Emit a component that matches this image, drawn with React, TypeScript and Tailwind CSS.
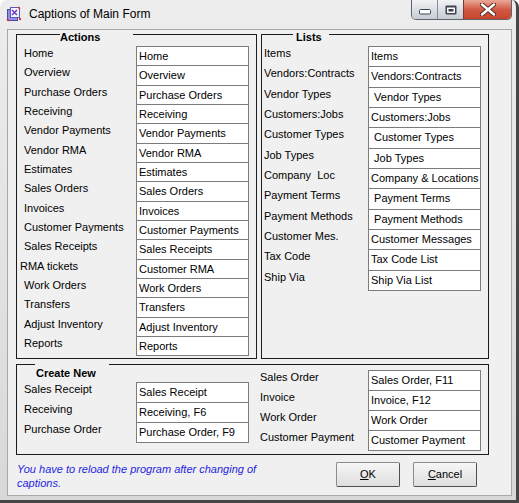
type Row = [string, string, boolean?];

const actions: Row[] = [
  ['Home', 'Home'],
  ['Overview', 'Overview'],
  ['Purchase Orders', 'Purchase Orders'],
  ['Receiving', 'Receiving'],
  ['Vendor Payments', 'Vendor Payments'],
  ['Vendor RMA', 'Vendor RMA'],
  ['Estimates', 'Estimates'],
  ['Sales Orders', 'Sales Orders'],
  ['Invoices', 'Invoices'],
  ['Customer Payments', 'Customer Payments'],
  ['Sales Receipts', 'Sales Receipts'],
  ['RMA tickets', 'Customer RMA', true],
  ['Work Orders', 'Work Orders'],
  ['Transfers', 'Transfers'],
  ['Adjust Inventory', 'Adjust Inventory'],
  ['Reports', 'Reports'],
];

const lists: Row[] = [
  ['Items', 'Items'],
  ['Vendors:Contracts', 'Vendors:Contracts'],
  ['Vendor Types', ' Vendor Types'],
  ['Customers:Jobs', 'Customers:Jobs'],
  ['Customer Types', ' Customer Types'],
  ['Job Types', ' Job Types'],
  ['Company  Loc', 'Company & Locations'],
  ['Payment Terms', ' Payment Terms'],
  ['Payment Methods', ' Payment Methods'],
  ['Customer Mes.', 'Customer Messages'],
  ['Tax Code', 'Tax Code List'],
  ['Ship Via', 'Ship Via List'],
];

const newLeft: Row[] = [
  ['Sales Receipt', 'Sales Receipt'],
  ['Receiving', 'Receiving, F6'],
  ['Purchase Order', 'Purchase Order, F9'],
];

const newRight: Row[] = [
  ['Sales Order', 'Sales Order, F11'],
  ['Invoice', 'Invoice, F12'],
  ['Work Order', 'Work Order'],
  ['Customer Payment', 'Customer Payment'],
];

function Group({
  legend,
  className,
  legendClass,
  children,
}: {
  legend: string;
  className: string;
  legendClass: string;
  children: React.ReactNode;
}) {
  return (
    <div className={`relative shrink-0 border border-[#1c1c1c] ${className}`}>
      <span className={`absolute bg-[#f0f0f0] font-bold leading-[14px] ${legendClass}`}>{legend}</span>
      {children}
    </div>
  );
}

function AppIcon() {
  return (
    <svg width="16" height="16" viewBox="0 0 16 16" className="-ml-[1px] mt-[6px] shrink-0">
      <rect x="1.5" y="3.5" width="10" height="11" fill="#8f8fe6" stroke="#4b4ba8" />
      <rect x="4.5" y="1.5" width="9" height="10" fill="#f4f4ff" stroke="#5a5ab8" />
      <path d="M6 4 L11 9 M11 4 L6 9" stroke="#7a3cc8" strokeWidth="1.6" />
      <path d="M12 1 l2 2 M1 13 l2 2" stroke="#e0303a" strokeWidth="1.5" />
      <circle cx="14" cy="13" r="1.2" fill="#e0303a" />
    </svg>
  );
}

function CaptionButtons() {
  return (
    <div className="ml-auto flex h-[20px] overflow-hidden rounded-b-[5px] border border-t-0 border-[#5f646c]">
      <div className="flex w-[25px] items-center justify-center bg-linear-to-b from-[#f2f3f5] to-[#c6ccd4]">
        <svg width="12" height="6" viewBox="0 0 12 6" className="mt-[4px]">
          <rect x="0.5" y="0.5" width="11" height="4.5" rx="1" fill="#fff" stroke="#3c4450" />
        </svg>
      </div>
      <div className="flex w-[26px] items-center justify-center border-l border-[#8a8f96] bg-linear-to-b from-[#f2f3f5] to-[#c6ccd4]">
        <svg width="12" height="10" viewBox="0 0 12 10">
          <rect x="0.5" y="0.5" width="11" height="9" rx="1" fill="#3c4450" />
          <rect x="2" y="2.5" width="8" height="5.5" fill="#fff" />
          <rect x="3.5" y="4" width="5" height="2.5" fill="#3c4450" />
        </svg>
      </div>
      <div className="flex w-[48px] items-center justify-center border-l border-[#7a3a30] bg-linear-to-b from-[#e9a898] via-[#d15a44] to-[#c8442c]">
        <svg width="16" height="13" viewBox="0 0 16 13">
          <path
            d="M2 1.5 L14 11.5 M14 1.5 L2 11.5"
            stroke="#5a2a22"
            strokeWidth="4.4"
            strokeLinecap="round"
          />
          <path d="M2 1.5 L14 11.5 M14 1.5 L2 11.5" stroke="#fff" strokeWidth="2.4" strokeLinecap="round" />
        </svg>
      </div>
    </div>
  );
}

export default function App() {
  return (
    <div className="flex h-[503px] w-[519px] flex-col rounded-t-[7px] border-r-[3px] border-b-[3px] border-[#474747] bg-linear-to-b from-[#ededed] to-[#d8d8d8] pb-[4px] pl-[7px] pr-[4px] font-['Liberation_Sans',Arial,sans-serif] text-[11px] text-black">
      <div className="flex h-[29px] shrink-0 items-start">
        <AppIcon />
        <span className="ml-[7px] mt-[7px] text-[12px] leading-[14px]">Captions of Main Form</span>
        <CaptionButtons />
      </div>

      <div className="flex flex-1 flex-col border border-[#a8a8a8] bg-[#f0f0f0] pl-[8px] pt-[4px]">
        <div className="flex gap-[4px]">
          <Group legend="Actions" className="h-[325px] w-[241px]" legendClass="-top-[5px] left-[43px] w-[73px]">
            <div className="flex flex-col pl-[7px] pt-[11px]">
              {actions.map(([label, value, shift]) => (
                <div key={label} className="flex h-[19.33px]">
                  <span className={shift ? '-ml-[4px] w-[116px] shrink-0 leading-[14px]' : 'w-[112px] shrink-0 leading-[14px]'}>
                    {label}
                  </span>
                  <div className="h-[20.33px] w-[113px] shrink-0 border border-[#7c7c7c] bg-white pl-[2px] leading-[18px] whitespace-pre">
                    {value}
                  </div>
                </div>
              ))}
            </div>
          </Group>

          <Group legend="Lists" className="h-[325px] w-[228px]" legendClass="-top-[5px] left-[31px] w-[36px] pl-[3px]">
            <div className="flex flex-col pl-[2px] pt-[11px]">
              {lists.map(([label, value]) => (
                <div key={label} className="flex h-[20.33px]">
                  <span className="w-[104px] shrink-0 whitespace-pre leading-[14px]">{label}</span>
                  <div className="h-[21.33px] w-[113px] shrink-0 border border-[#7c7c7c] bg-white pl-[2px] leading-[19px] whitespace-pre">
                    {value}
                  </div>
                </div>
              ))}
            </div>
          </Group>
        </div>

        <Group legend="Create New" className="mt-[5px] h-[91px] w-[473px]" legendClass="-top-[2px] left-[18px] w-[74px] pl-[1px] pt-[3px]">
          <div className="flex">
            <div className="flex flex-col pl-[7px] pt-[17px]">
              {newLeft.map(([label, value]) => (
                <div key={label} className="flex h-[20px]">
                  <span className="w-[112px] shrink-0 leading-[14px]">{label}</span>
                  <div className="h-[21px] w-[113px] shrink-0 border border-[#7c7c7c] bg-white pl-[2px] leading-[19px]">
                    {value}
                  </div>
                </div>
              ))}
            </div>
            <div className="ml-[11px] flex flex-col pt-[5px]">
              {newRight.map(([label, value]) => (
                <div key={label} className="flex h-[20px]">
                  <span className="w-[108px] shrink-0 leading-[14px]">{label}</span>
                  <div className="h-[21px] w-[113px] shrink-0 border border-[#7c7c7c] bg-white pl-[2px] leading-[19px]">
                    {value}
                  </div>
                </div>
              ))}
            </div>
          </div>
        </Group>

        <div className="mt-[7px] flex">
          <p className="pl-[1px] leading-[14px] text-[#1f1fe0] italic">
            You have to reload the program after changing of
            <br />
            captions.
          </p>
          <div className="ml-auto mr-[34px] flex gap-[13px]">
            <button className="h-[25px] w-[64px] rounded-[2px] border border-[#8c8c8c] border-r-[#4f4f4f] border-b-[#4f4f4f] bg-linear-to-b from-[#f6f6f6] to-[#dedede] text-[11px]">
              <span className="underline">O</span>K
            </button>
            <button className="h-[25px] w-[64px] rounded-[2px] border border-[#8c8c8c] border-r-[#4f4f4f] border-b-[#4f4f4f] bg-linear-to-b from-[#f6f6f6] to-[#dedede] text-[11px]">
              <span className="underline">C</span>ancel
            </button>
          </div>
        </div>
      </div>
    </div>
  );
}
